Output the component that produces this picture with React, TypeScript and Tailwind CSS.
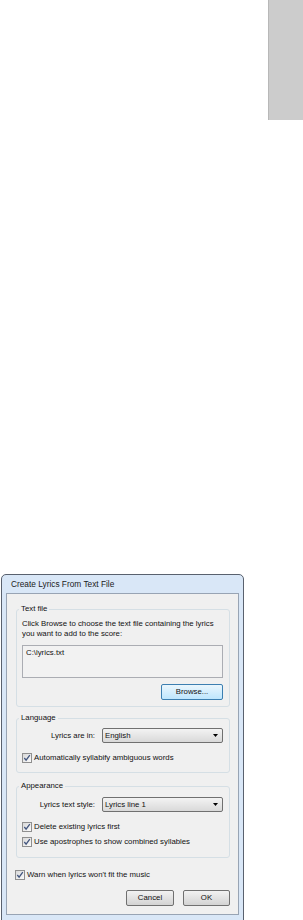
import React from "react";

function Check() {
  return (
    <span className="flex h-[10px] w-[10px] shrink-0 items-center justify-center border border-[#8f8f8f] bg-linear-to-br from-[#d8d8d8] to-[#fbfbfb]">
      <svg width="8" height="8" viewBox="0 0 8 8">
        <path d="M1.3 4 L3.1 6.2 L6.8 1.2" stroke="#42557e" strokeWidth="1.3" fill="none" />
      </svg>
    </span>
  );
}

function Combo({ text }: { text: string }) {
  return (
    <div className="flex h-[15px] flex-1 items-center justify-between rounded-[2px] border border-[#707070] bg-linear-to-b from-[#f3f3f3] to-[#d9d9d9] pl-[2px] pr-[4px]">
      <span>{text}</span>
      <svg width="5" height="3" viewBox="0 0 5 3">
        <path d="M0 0H5L2.5 3Z" fill="#000" />
      </svg>
    </div>
  );
}

function Btn({ text, w, blue }: { text: string; w: string; blue?: boolean }) {
  return (
    <div
      className={
        blue
          ? "flex h-[16px] w-[62px] items-center justify-center rounded-[2px] border border-[#3c7fb1] bg-linear-to-b from-[#eaf6fd] to-[#bee6fd]"
          : w === "c"
          ? "flex h-[16px] w-[48px] items-center justify-center rounded-[2px] border border-[#707070] bg-linear-to-b from-[#f2f2f2] to-[#d3d3d3]"
          : "flex h-[16px] w-[47px] items-center justify-center rounded-[2px] border border-[#707070] bg-linear-to-b from-[#f2f2f2] to-[#d3d3d3]"
      }
    >
      {text}
    </div>
  );
}

export default function App() {
  return (
    <div className="flex h-[920px] w-[303px] flex-col overflow-hidden bg-white font-['Liberation_Sans',Arial,sans-serif] text-[7.8px] leading-[10px] text-[#111]">
      <div className="flex justify-end">
        <div className="h-[120px] w-[35px] border-l border-[#b8b8b8] bg-[#cccccc]" />
      </div>
      <div className="ml-[1px] mt-[454px] w-[243px] shrink-0 rounded-t-[5px] border border-[#59616e] bg-[#d9e7f7] px-[4px] pb-[8px]">
        <div className="flex h-[18px] items-center pl-[5px] text-[8.3px] text-[#1a1a1a]">
          Create Lyrics From Text File
        </div>
        <div className="flex flex-col border border-[#98a4b4] bg-[#f0f0f0] pl-[9px] pr-[8px] pb-[8px] pt-[10px]">
          <fieldset className="m-0 min-w-0 rounded-[3px] border border-[#d5dfe5] p-0">
            <legend className="ml-[2px] px-[2px] leading-[10px]">Text file</legend>
            <div className="flex flex-col pl-[5px] pr-[6px] pt-[5px] pb-[6px]">
              <div>Click Browse to choose the text file containing the lyrics</div>
              <div>you want to add to the score:</div>
              <div className="mt-[6px] h-[33px] border border-[#abadb3] bg-[#f2f2f2] pl-[3px] pt-[2px]">
                C:\lyrics.txt
              </div>
              <div className="mt-[6px] flex justify-end">
                <Btn text="Browse..." w="b" blue />
              </div>
            </div>
          </fieldset>
          <fieldset className="m-0 mt-[6px] min-w-0 rounded-[3px] border border-[#d5dfe5] p-0">
            <legend className="ml-[2px] px-[2px] leading-[10px]">Language</legend>
            <div className="flex flex-col pl-[5px] pr-[6px] pt-[5px] pb-[9px]">
              <div className="flex items-center gap-[7px]">
                <div className="w-[73px] text-right">Lyrics are in:</div>
                <Combo text="English" />
              </div>
              <div className="mt-[10px] flex items-center gap-[2px]">
                <Check />
                <span>Automatically syllabify ambiguous words</span>
              </div>
            </div>
          </fieldset>
          <fieldset className="m-0 mt-[8px] min-w-0 rounded-[3px] border border-[#d5dfe5] p-0">
            <legend className="ml-[2px] px-[2px] leading-[10px]">Appearance</legend>
            <div className="flex flex-col pl-[5px] pr-[6px] pt-[6px] pb-[10px]">
              <div className="flex items-center gap-[7px]">
                <div className="w-[73px] text-right">Lyrics text style:</div>
                <Combo text="Lyrics line 1" />
              </div>
              <div className="mt-[10px] flex items-center gap-[2px]">
                <Check />
                <span>Delete existing lyrics first</span>
              </div>
              <div className="mt-[5px] flex items-center gap-[2px]">
                <Check />
                <span>Use apostrophes to show combined syllables</span>
              </div>
            </div>
          </fieldset>
          <div className="ml-[-1px] mt-[12px] flex items-center gap-[2px]">
            <Check />
            <span>Warn when lyrics won't fit the music</span>
          </div>
          <div className="mt-[10px] flex justify-end gap-[9px]">
            <Btn text="Cancel" w="c" />
            <Btn text="OK" w="o" />
          </div>
        </div>
      </div>
    </div>
  );
}
